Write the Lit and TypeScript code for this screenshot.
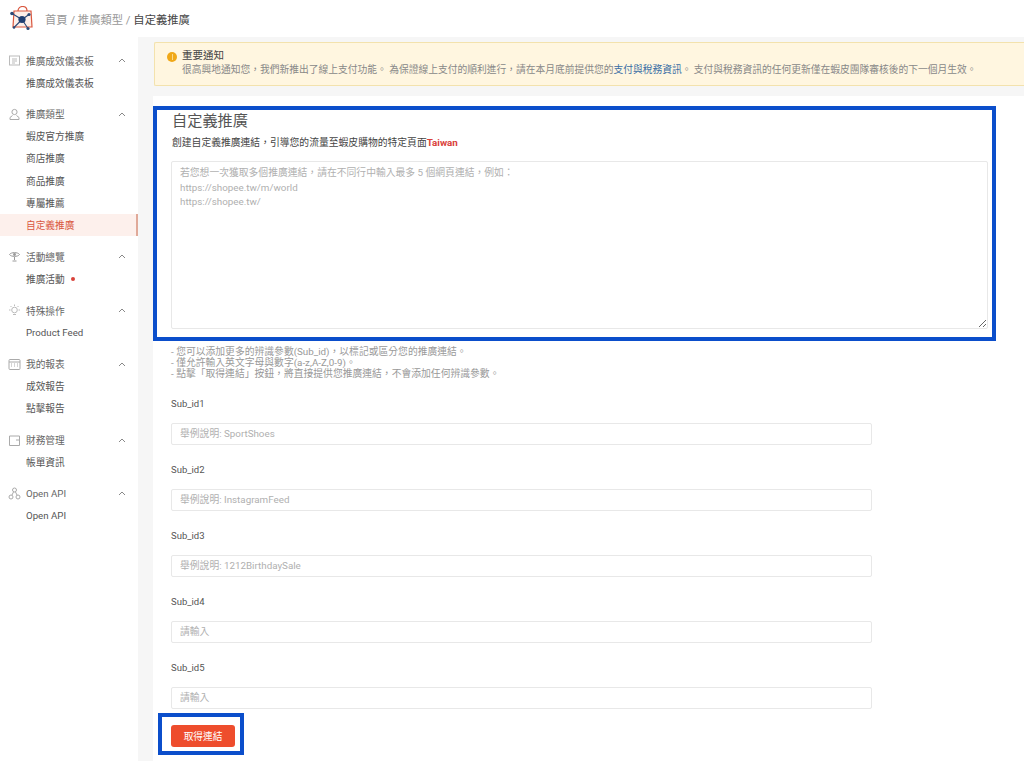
import { LitElement, html, css, svg } from "lit";
import { customElement } from "lit/decorators.js";

const icons: Record<string, unknown> = {
  board: svg`<rect x="1.5" y="2" width="10" height="9" fill="none" stroke="#bbb"/><path d="M4 5h5M4 7h5M4 9h3" stroke="#bbb" fill="none"/>`,
  user: svg`<circle cx="6.5" cy="4" r="2.6" fill="none" stroke="#aaa"/><path d="M4.5 7.5L2 9.5v2h9v-2L8.5 7.5" fill="none" stroke="#aaa"/>`,
  eye: svg`<path d="M1.5 4.5C3 2 10 2 11.5 4.5C10 7 3 7 1.5 4.5z" fill="none" stroke="#999"/><circle cx="6.5" cy="4.5" r="1.4" fill="#999"/><path d="M6.5 7v3M4.5 11h4" stroke="#999" fill="none"/>`,
  bulb: svg`<circle cx="6.5" cy="6" r="2.8" fill="none" stroke="#bbb"/><path d="M5 10.5h3M6.5 0.5v1.5M1 6h1.5M10.5 6H12M2.5 2l1 1M10.5 2l-1 1" stroke="#bbb" fill="none"/>`,
  cal: svg`<rect x="1" y="1.5" width="11" height="10" rx="1" fill="none" stroke="#aaa"/><path d="M1 4h11" stroke="#aaa"/><path d="M3 6h1M6 6h1M9 6h1M3 8h1M6 8h1M9 8h1" stroke="#aaa" fill="none"/>`,
  wallet: svg`<path d="M1.5 2h10v9.5h-10z" fill="none" stroke="#aaa"/><path d="M8 6h3.5" stroke="#aaa"/>`,
  nodes: svg`<circle cx="6.5" cy="3" r="2" fill="none" stroke="#aaa"/><circle cx="3" cy="10" r="2" fill="none" stroke="#aaa"/><circle cx="10" cy="10" r="2" fill="none" stroke="#aaa"/><path d="M5.6 4.8L3.9 8.2M7.4 4.8l1.7 3.4" stroke="#aaa" fill="none"/>`,
};

const groups = [
  { icon: "board", title: "推廣成效儀表板", items: ["推廣成效儀表板"] },
  { icon: "user", title: "推廣類型", items: ["蝦皮官方推廣", "商店推廣", "商品推廣", "專屬推薦", "自定義推廣"] },
  { icon: "eye", title: "活動總覽", items: ["推廣活動"] },
  { icon: "bulb", title: "特殊操作", items: ["Product Feed"] },
  { icon: "cal", title: "我的報表", items: ["成效報告", "點擊報告"] },
  { icon: "wallet", title: "財務管理", items: ["帳單資訊"] },
  { icon: "nodes", title: "Open API", items: ["Open API"] },
];

const fields = [
  ["Sub_id1", "舉例說明: SportShoes"],
  ["Sub_id2", "舉例說明: InstagramFeed"],
  ["Sub_id3", "舉例說明: 1212BirthdaySale"],
  ["Sub_id4", "請輸入"],
  ["Sub_id5", "請輸入"],
];

@customElement("app-root")
export class AppRoot extends LitElement {
  static styles = css`
    :host {
      display: block;
      width: 1024px;
      height: 761px;
      overflow: hidden;
      position: relative;
      font-family: Roboto, "Noto Sans CJK TC", sans-serif;
      font-size: 9.7px;
      color: #555;
      background: #f6f6f6;
    }
    * { box-sizing: border-box; }
    .top {
      height: 37px;
      background: #fff;
      display: flex;
      align-items: center;
      padding-left: 10px;
      gap: 11px;
      font-size: 11.3px;
      color: #999;
    }
    .top .cur { color: #444; }
    .body { display: flex; height: 724px; }
    .side {
      width: 138px;
      flex: none;
      background: #fff;
      padding-top: 13px;
    }
    .group { margin-bottom: 10px; }
    .ghead {
      height: 21.5px;
      display: flex;
      align-items: center;
      padding-left: 8px;
      color: #666;
    }
    .ghead svg.ic { width: 13px; height: 13px; margin-right: 5px; flex: none; }
    .ghead span { flex: 1; }
    .ghead svg.ch { width: 8px; height: 5px; margin-right: 12px; }
    .item {
      height: 22.2px;
      display: flex;
      align-items: center;
      padding-left: 26px;
      color: #555;
    }
    .item.on {
      color: #d9573f;
      background: #fdf0ec;
      border-right: 2px solid #e0a999;
    }
    .dot {
      width: 4px;
      height: 4px;
      border-radius: 50%;
      background: #d9413a;
      margin-left: 6px;
    }
    .main { flex: 1; padding: 5px 0 0 16px; min-width: 0; }
    .alert {
      height: 44px;
      background: #fff6e0;
      border: 1px solid #f3e2ad;
      border-right: none;
      border-radius: 2px 0 0 2px;
      padding: 6px 0 0 27px;
      position: relative;
      line-height: 14px;
      color: #888;
      font-size: 9.76px;
      white-space: nowrap;
    }
    .alert b { display: block; font-weight: 400; color: #444; font-size: 10.5px; }
    .alert a { color: #3a6ea5; }
    .warn {
      position: absolute;
      left: 12px;
      top: 9px;
      width: 10px;
      height: 10px;
      border-radius: 50%;
      background: #f0a818;
    }
    .warn::after {
      content: "";
      position: absolute;
      left: 4.5px;
      top: 2px;
      width: 1px;
      height: 6px;
      background: #fbd98a;
    }
    .card {
      margin: 10px 0 0 -1px;
      background: #fff;
      height: 670px;
      padding: 15px 36px 0 18px;
    }
    h1 {
      margin: 0 0 0 1px;
      font-size: 15.2px;
      font-weight: 400;
      line-height: 21px;
      color: #555;
    }
    .sub { margin: 4px 0 0 1px; line-height: 14px; color: #444; font-size: 9.8px; }
    .sub em { font-style: normal; font-weight: 700; color: #d9413a; }
    textarea {
      display: block;
      width: 817px;
      height: 168px;
      margin-top: 11px;
      padding: 4px 8px;
      border: 1px solid #e8e8e8;
      border-radius: 2px;
      font: inherit;
      font-size: 9.8px;
      line-height: 14.5px;
      outline: none;
    }
    textarea::placeholder, input::placeholder { color: #b0b0b0; opacity: 1; }
    .hint {
      margin: 17px 0 0;
      line-height: 11px;
      color: #999;
      font-size: 9.8px;
    }
    .field label { display: block; height: 43.5px; padding-top: 18px; line-height: 14px; color: #555; font-size: 9.5px; }
    input {
      display: block;
      width: 701px;
      height: 22px;
      margin-bottom: 0.5px;
      padding: 0 8px;
      border: 1px solid #e8e8e8;
      border-radius: 2px;
      font: inherit;
      font-size: 9.8px;
      outline: none;
    }
    .btn {
      display: block;
      margin-top: 16px;
      width: 64px;
      height: 22px;
      background: #ee4d2d;
      color: #fff;
      border: none;
      border-radius: 3px;
      font: inherit;
    }
    .mark { position: absolute; border: 4px solid #0b4ecb; pointer-events: none; }
    .m1 { left: 153px; top: 106px; width: 843px; height: 235px; }
    .m2 { left: 158px; top: 713px; width: 86px; height: 42px; }
  `;

  render() {
    return html`
      <div class="top">
        <svg width="24" height="26" viewBox="0 0 24 26">
          <path d="M4 5h17l1 16H3z" fill="#fdeee8" stroke="#d9573f" stroke-width="1.2"/>
          <path d="M8 5c0-6 9-6 9 0" fill="none" stroke="#d9573f" stroke-width="1.2"/>
          <path d="M2 7.5L12 13.5L19 8.5M12 13.5L4 21.5M12 13.5L18 22.5" stroke="#2b4a78" stroke-width="1.1" fill="none"/>
          <circle cx="12" cy="13.5" r="3.6" fill="#1f3f73"/>
          <circle cx="2" cy="7.5" r="1.8" fill="#2b4a78"/>
          <circle cx="19" cy="8.5" r="1.6" fill="#2b4a78"/>
          <circle cx="18" cy="22.5" r="1.6" fill="#2b4a78"/>
          <circle cx="4" cy="21.5" r="1.3" fill="#2b4a78"/>
        </svg>
        <span>首頁 / 推廣類型 / <span class="cur">自定義推廣</span></span>
      </div>
      <div class="body">
        <nav class="side">
          ${groups.map(
            (g) => html`
              <div class="group">
                <div class="ghead">
                  <svg class="ic" viewBox="0 0 13 13">${icons[g.icon]}</svg>
                  <span>${g.title}</span>
                  <svg class="ch" viewBox="0 0 8 5"><path d="M1 4l3-3 3 3" fill="none" stroke="#888"/></svg>
                </div>
                ${g.items.map(
                  (i) => html`<div class="item ${i === "自定義推廣" ? "on" : ""}">
                    ${i}${i === "推廣活動" ? html`<i class="dot"></i>` : ""}
                  </div>`
                )}
              </div>
            `
          )}
        </nav>
        <main class="main">
          <div class="alert">
            <i class="warn"></i>
            <b>重要通知</b>
            很高興地通知您，我們新推出了線上支付功能。 為保證線上支付的順利進行，請在本月底前提供您的<a>支付與稅務資訊</a>。 支付與稅務資訊的任何更新僅在蝦皮團隊審核後的下一個月生效。
          </div>
          <section class="card">
            <h1>自定義推廣</h1>
            <div class="sub">創建自定義推廣連結，引導您的流量至蝦皮購物的特定頁面<em>Taiwan</em></div>
            <textarea placeholder=${"若您想一次獲取多個推廣連結，請在不同行中輸入最多 5 個網頁連結，例如：\nhttps://shopee.tw/m/world\nhttps://shopee.tw/"}></textarea>
            <p class="hint">
              - 您可以添加更多的辨識參數(Sub_id)，以標記或區分您的推廣連結。<br />
              - 僅允許輸入英文字母與數字(a-z,A-Z,0-9)。<br />
              - 點擊「取得連結」按鈕，將直接提供您推廣連結，不會添加任何辨識參數。
            </p>
            ${fields.map(
              ([l, p]) => html`<div class="field">
                <label>${l}</label>
                <input placeholder=${p} />
              </div>`
            )}
            <button class="btn">取得連結</button>
          </section>
        </main>
      </div>
      <div class="mark m1"></div>
      <div class="mark m2"></div>
    `;
  }
}
